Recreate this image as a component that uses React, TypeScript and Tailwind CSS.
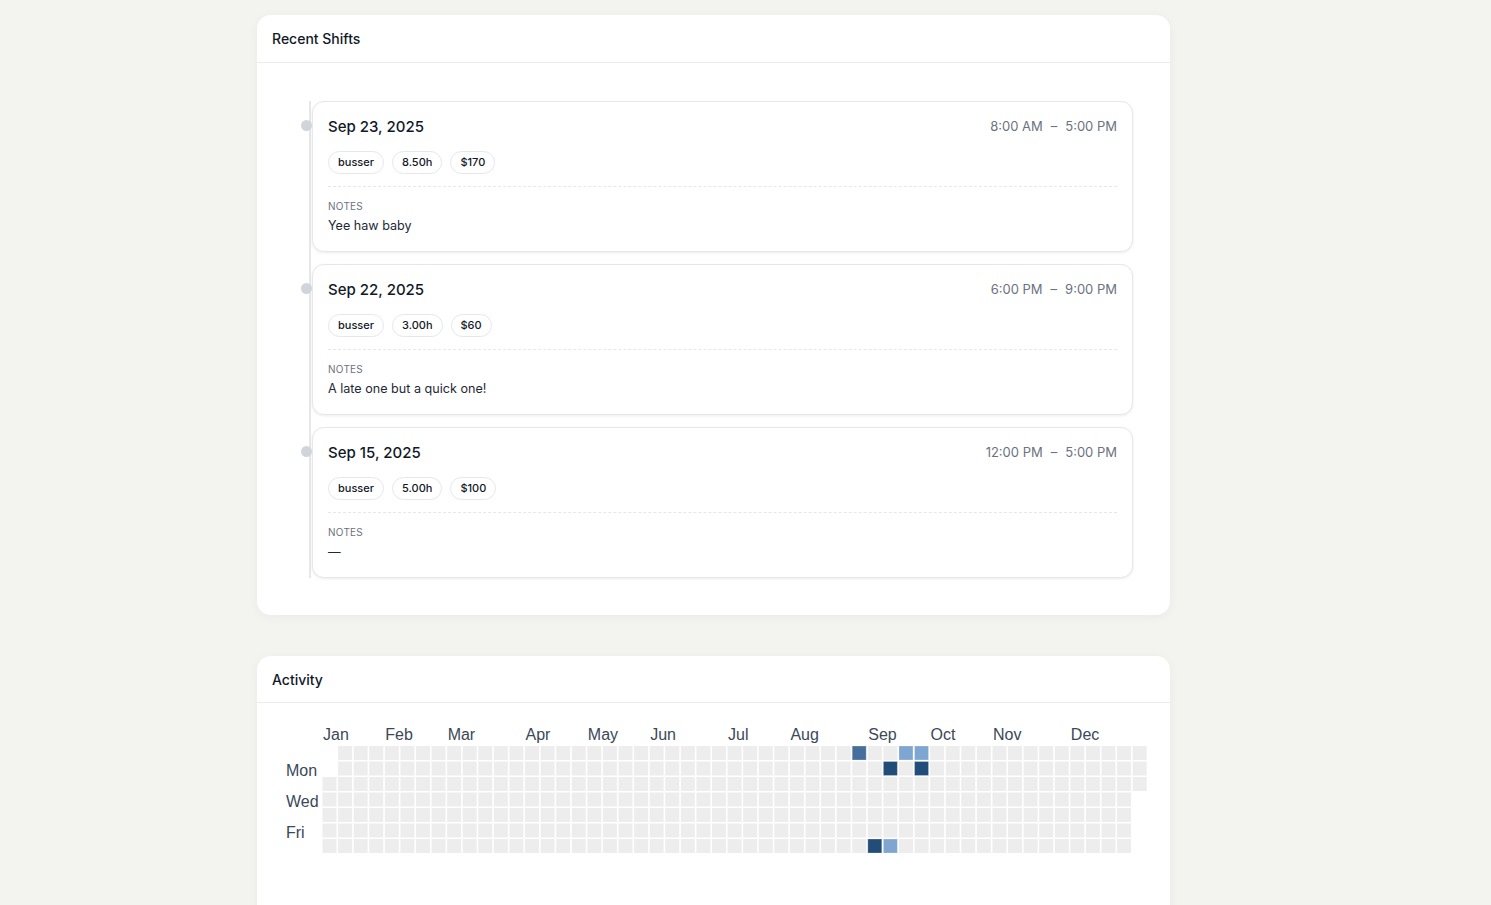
import React from 'react';

const shifts = [
  { date: 'Sep 23, 2025', start: '8:00 AM', end: '5:00 PM', role: 'busser', hours: '8.50h', pay: '$170', notes: 'Yee haw baby' },
  { date: 'Sep 22, 2025', start: '6:00 PM', end: '9:00 PM', role: 'busser', hours: '3.00h', pay: '$60', notes: 'A late one but a quick one!' },
  { date: 'Sep 15, 2025', start: '12:00 PM', end: '5:00 PM', role: 'busser', hours: '5.00h', pay: '$100', notes: '—' },
];

const months = [
  ['Jan', 0], ['Feb', 4], ['Mar', 8], ['Apr', 13], ['May', 17], ['Jun', 21],
  ['Jul', 26], ['Aug', 30], ['Sep', 35], ['Oct', 39], ['Nov', 43], ['Dec', 48],
] as const;

// filled cells: "col-row" -> colour
const filled: Record<string, string> = {
  '34-0': '#46709b',
  '37-0': '#7ea6d1',
  '38-0': '#7ea6d1',
  '36-1': '#234d79',
  '38-1': '#234d79',
  '35-6': '#234d79',
  '36-6': '#7ea6d1',
};

const PITCH_X = 15.58;
const PITCH_Y = 15.5;
const X0 = 50.5;
const Y0 = 26;

function Heatmap() {
  const cells: React.ReactNode[] = [];
  for (let c = 0; c < 53; c++) {
    for (let r = 0; r < 7; r++) {
      if (c === 0 && r < 2) continue;
      if (c === 52 && r > 2) continue;
      const fill = filled[`${c}-${r}`];
      cells.push(
        <rect
          key={`${c}-${r}`}
          x={X0 + c * PITCH_X}
          y={Y0 + r * PITCH_Y}
          width={14}
          height={14}
          fill={fill ?? '#ededed'}
          stroke={fill ? 'rgba(255,255,255,0.25)' : 'none'}
          strokeWidth={1}
        />
      );
    }
  }
  return (
    <svg width={890} height={140} className="block" style={{ fontFamily: '"Liberation Sans", Arial, sans-serif' }}>
      {months.map(([m, c]) => (
        <text key={m} x={X0 + 0.5 + c * PITCH_X} y={19.5} fontSize={16} fill="#3b4858">{m}</text>
      ))}
      <text x={14} y={56} fontSize={16} fill="#3b4858">Mon</text>
      <text x={14} y={87} fontSize={16} fill="#3b4858">Wed</text>
      <text x={14} y={118} fontSize={16} fill="#3b4858">Fri</text>
      {cells}
    </svg>
  );
}

function ShiftCard({ s }: { s: typeof shifts[number] }) {
  return (
    <div className="relative">
      <span className="absolute left-[-11px] top-[19px] w-[11px] h-[11px] rounded-full bg-[#d1d5db]" />
      <div className="bg-white border border-[#e6e7ea] rounded-[12px] shadow-[0_1px_3px_rgba(0,0,0,0.08)] px-[15px] pt-[15px] pb-[15px]">
        <div className="flex items-center justify-between h-5">
          <span className="text-[15px] font-medium text-[#111827]">{s.date}</span>
          <span className="flex items-center gap-2 text-[13px] text-[#6b7280]">
            <span>{s.start}</span>
            <span>–</span>
            <span>{s.end}</span>
          </span>
        </div>
        <div className="mt-[14px] flex gap-2">
          {[s.role, s.hours, s.pay].map(p => (
            <span key={p} className="h-[23px] px-[9px] flex items-center rounded-full border border-[#e5e7eb] text-[11px] font-medium text-[#111827]">{p}</span>
          ))}
        </div>
        <div className="mt-3 border-t border-dashed border-[#e5e7eb] pt-3">
          <div className="text-[10px] leading-[14px] uppercase text-[#6b7280] tracking-wide">Notes</div>
          <div className="mt-[3px] text-[12.6px] leading-5 text-[#1f2937]">{s.notes}</div>
        </div>
      </div>
    </div>
  );
}

export default function App() {
  return (
    <div className="min-h-screen bg-[#f3f3f0] pt-[15px] pb-10 pl-[257px]" style={{ fontFamily: 'Inter, "Noto Sans", sans-serif' }}>
      <div className="w-[913px] flex flex-col gap-[41px]">
        <section className="bg-white rounded-[14px] shadow-[0_2px_12px_rgba(0,0,0,0.04)]">
          <div className="h-[48px] flex items-center px-[15px] border-b border-[#ececec]">
            <h2 className="text-[14px] font-medium text-[#111827]">Recent Shifts</h2>
          </div>
          <div className="pl-[52px] pr-[37px] pt-[38px] pb-[37px]">
            <div className="border-l-2 border-[#e5e7eb] pl-px flex flex-col gap-3">
              {shifts.map(s => <ShiftCard key={s.date} s={s} />)}
            </div>
          </div>
        </section>

        <section className="bg-white rounded-[14px] shadow-[0_2px_12px_rgba(0,0,0,0.04)]">
          <div className="h-[47px] flex items-center px-[15px] border-b border-[#ececec]">
            <h2 className="text-[14px] font-medium text-[#111827]">Activity</h2>
          </div>
          <div className="pl-[15px] pt-[17px] pb-[80px]">
            <Heatmap />
          </div>
        </section>
      </div>
    </div>
  );
}
